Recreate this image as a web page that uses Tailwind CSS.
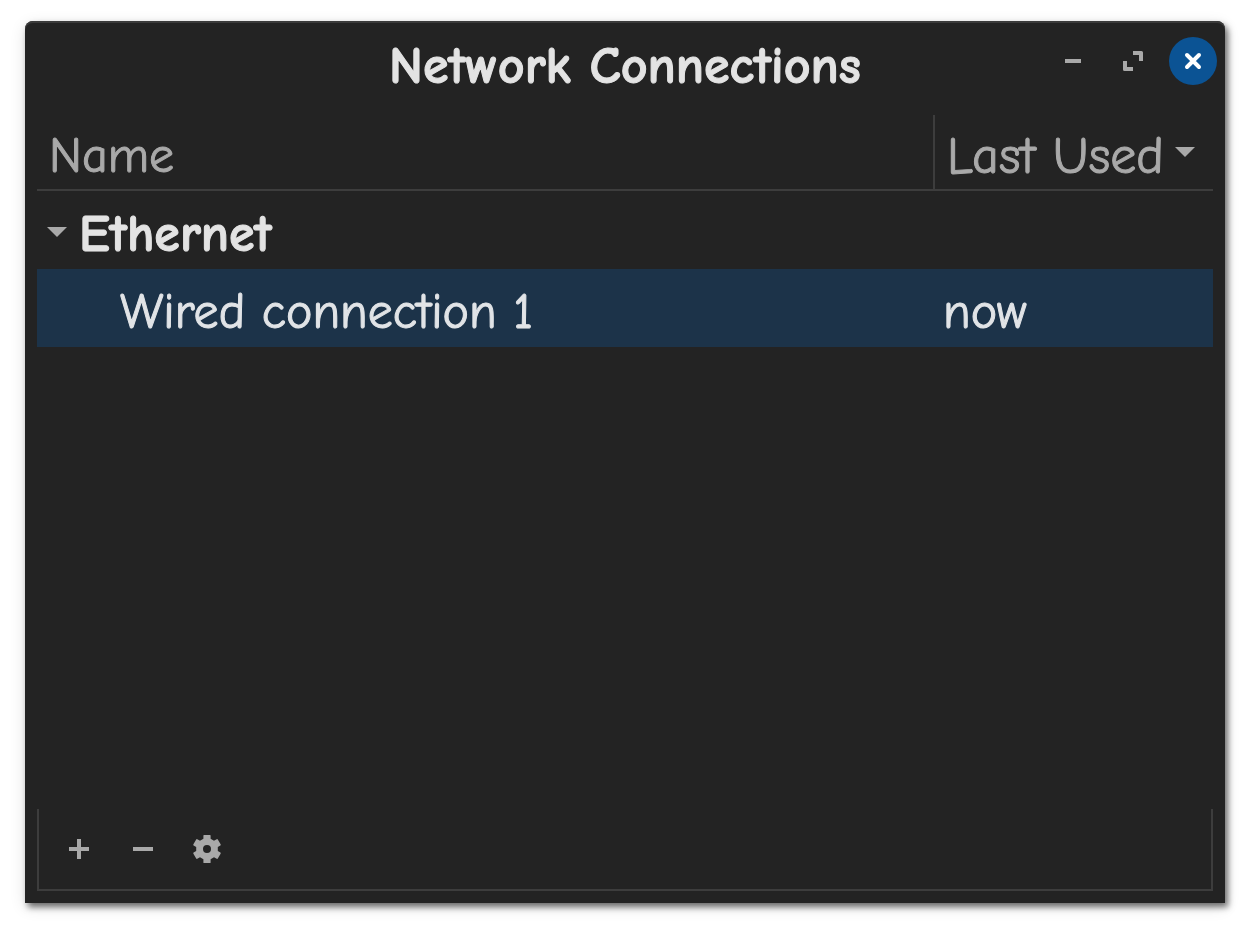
<!DOCTYPE html>
<html lang="en">
<head>
  <meta charset="UTF-8">
  <meta name="viewport" content="width=device-width, initial-scale=1.0">
  <title>Network Connections</title>
  <script src="https://cdn.jsdelivr.net/npm/@tailwindcss/browser@4"></script>
</head>
<body class="flex min-h-screen bg-white pt-[21px] pr-[29px] pb-[31px] pl-[25px] font-['Comic_Sans_MS','Comic_Neue',Lato,sans-serif] text-[50px] leading-[60px] text-[#e3e3e3] [-webkit-text-stroke:1px_currentColor]">

  <main class="flex flex-1 flex-col rounded-t-lg bg-[#232323] px-3 pb-3 shadow-[3px_4px_6px_rgba(0,0,0,0.55),0_4px_16px_rgba(0,0,0,0.12),inset_0_2px_0_#3b3b3b]">

    <!-- Title bar -->
    <header class="grid h-[94px] grid-cols-[1fr_auto_1fr] items-center">
      <h1 class="col-start-2 pb-1 text-[52px] font-bold whitespace-nowrap">Network Connections</h1>
      <div class="-mr-1 flex gap-3 justify-self-end pb-[14px]">
        <button type="button" aria-label="Minimize" class="size-12 text-[#a9a9a9]">
          <svg class="size-12" viewBox="0 0 48 48" fill="currentColor"><path d="M16 22h16v4H16z"/></svg>
        </button>
        <button type="button" aria-label="Maximize" class="size-12 text-[#a9a9a9]">
          <svg class="size-12" viewBox="0 0 48 48" fill="currentColor">
            <path d="M24 14h8.500a1.500 1.500 0 0 1 1.500 1.500V24h-4v-6h-6z"/>
            <path d="M14 24h4v6h6v4h-8.500a1.500 1.500 0 0 1-1.500-1.500z"/>
          </svg>
        </button>
        <button type="button" aria-label="Close" class="size-12 rounded-full bg-[#0b5394] text-white">
          <svg class="size-12" viewBox="0 0 48 48" fill="none" stroke="currentColor" stroke-width="4" stroke-linecap="round"><path d="M18 18l12 12M30 18L18 30"/></svg>
        </button>
      </div>
    </header>

    <!-- Connection list -->
    <div class="flex-1">
      <table class="w-full table-fixed border-separate border-spacing-0 text-left">
        <thead class="text-[#a9a9a9]">
          <tr class="h-[76px]">
            <th scope="col" class="border-b-2 border-[#3d3d3d] px-3 py-0 font-normal">
              <button type="button" class="block pt-2">Name</button>
            </th>
            <th scope="col" aria-sort="descending" class="w-[280px] border-b-2 border-l-2 border-[#3d3d3d] py-0 pr-[18px] pl-3 font-normal">
              <button type="button" class="flex w-full items-center justify-between whitespace-nowrap">
                <span class="pt-2 text-[52px]">Last Used</span>
                <svg class="h-[10px] w-5" viewBox="0 0 20 10" fill="currentColor"><path d="M0 0h20L10 10z"/></svg>
              </button>
            </th>
          </tr>
        </thead>
        <tbody>
          <tr class="h-[78px]">
            <th scope="rowgroup" colspan="2" class="pt-1 pl-[10px] font-bold">
              <button type="button" aria-expanded="true" class="flex items-center gap-3">
                <svg class="h-[10px] w-5 text-[#a9a9a9]" viewBox="0 0 20 10" fill="currentColor"><path d="M0 0h20L10 10z"/></svg>
                <span class="pt-1 text-[52px]">Ethernet</span>
              </button>
            </th>
          </tr>
          <tr aria-selected="true" class="h-[78px] bg-[#1c3349] text-[#e1e4e7]">
            <td class="pt-2 pl-[83px]">Wired connection 1</td>
            <td class="pt-2 pl-[10px]">now</td>
          </tr>
        </tbody>
      </table>
    </div>

    <!-- Toolbar -->
    <div role="toolbar" aria-label="Connection actions" class="flex h-[82px] items-center border-x-2 border-b-2 border-[#3d3d3d] px-2 text-[#a9a9a9]">
      <button type="button" aria-label="Add connection" class="size-16">
        <svg class="size-16" viewBox="0 0 64 64" fill="currentColor"><path d="M30 22h4v8h8v4h-8v8h-4v-8h-8v-4h8z"/></svg>
      </button>
      <button type="button" aria-label="Remove connection" class="size-16">
        <svg class="size-16" viewBox="0 0 64 64" fill="currentColor"><path d="M22 30h20v4H22z"/></svg>
      </button>
      <button type="button" aria-label="Edit connection" class="size-16">
        <svg class="size-16" viewBox="0 0 64 64" fill="currentColor">
          <path fill-rule="evenodd" d="M29 18h6q.6 0 .6.6v3.200l3.400 1.900 2.700-1.500q.7-.4 1.100.3l2.800 4.800q.4.700-.2 1.100l-2.600 1.600v4l2.600 1.600q.6.400.2 1.100l-2.800 4.800q-.4.700-1.100.3l-2.700-1.500-3.400 1.900v3.200q0 .6-.6.600h-6q-.6 0-.6-.6v-3.200L25 40.300l-2.700 1.500q-.7.400-1.100-.3l-2.800-4.800q-.4-.7.2-1.100l2.600-1.600v-4l-2.600-1.600q-.6-.4-.2-1.100l2.800-4.800q.4-.7 1.100-.3l2.700 1.500 3.400-1.900v-3.200q0-.6.600-.6zM32 28a4 4 0 1 0 0 8 4 4 0 0 0 0-8z"/>
        </svg>
      </button>
    </div>

  </main>

</body>
</html>
